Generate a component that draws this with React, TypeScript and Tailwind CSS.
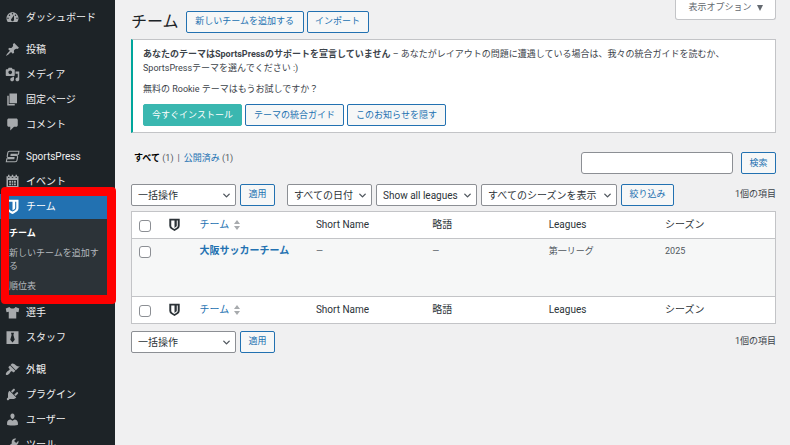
import { ReactNode } from "react";
import { ChevronDown } from "lucide-react";
import clsx from "clsx";

type MenuItem = { label: string; icon: ReactNode };

const icons = {
  dashboard: (
    <path d="M3.76 16h12.48c1.1-1.37 1.76-3.11 1.76-5 0-4.42-3.58-8-8-8s-8 3.58-8 8c0 1.89.66 3.63 1.76 5zM10 4c.55 0 1 .45 1 1s-.45 1-1 1-1-.45-1-1 .45-1 1-1zM6 6c.55 0 1 .45 1 1s-.45 1-1 1-1-.45-1-1 .45-1 1-1zm8 0c.55 0 1 .45 1 1s-.45 1-1 1-1-.45-1-1 .45-1 1-1zm-5.37 5.55L12 7v6c0 1.1-.9 2-2 2s-2-.9-2-2c0-.57.24-1.08.63-1.45zM4 10c.55 0 1 .45 1 1s-.45 1-1 1-1-.45-1-1 .45-1 1-1zm12 0c.55 0 1 .45 1 1s-.45 1-1 1-1-.45-1-1 .45-1 1-1z" fillRule="evenodd" />
  ),
  post: (
    <path d="M10.44 3.02l1.82-1.82 6.36 6.35-1.83 1.82c-1.05-.68-2.48-.57-3.41.36l-.75.75c-.92.93-1.04 2.35-.35 3.41l-1.83 1.82-2.41-2.41-2.8 2.79c-.42.42-3.38 2.71-3.8 2.29s1.86-3.39 2.28-3.81l2.79-2.79L4.1 9.36l1.83-1.82c1.05.69 2.48.57 3.4-.36l.75-.75c.93-.92 1.05-2.35.36-3.41z" />
  ),
  media: (
    <path d="M13 11V4c0-.55-.45-1-1-1h-1.67L9 1H5L3.67 3H2c-.55 0-1 .45-1 1v7c0 .55.45 1 1 1h10c.55 0 1-.45 1-1zM7 4.5c1.38 0 2.5 1.12 2.5 2.5S8.38 9.5 7 9.5 4.5 8.38 4.5 7 5.62 4.5 7 4.5zM14 6h5v10.5c0 1.38-1.12 2.5-2.5 2.5S14 17.88 14 16.5s1.12-2.5 2.5-2.5c.17 0 .34.02.5.05V9h-3V6zm-4 8.05V13h2v3.5c0 1.38-1.12 2.5-2.5 2.5S7 17.88 7 16.5 8.12 14 9.5 14c.17 0 .34.02.5.05z" fillRule="evenodd" />
  ),
  page: <path d="M6 15V2h10v13H6zm-1 1h8v2H3V5h2v11z" />,
  comment: (
    <path d="M5 2h10c1.1 0 2 .9 2 2v7c0 1.1-.9 2-2 2h-3l-5 5v-5H5c-1.1 0-2-.9-2-2V4c0-1.1.9-2 2-2z" />
  ),
  sportspress: (
    <path
      d="M18.500 3H6Q4 3 3.700 5L3 9.500Q2.800 11.500 4.500 11.500H12L11.800 13H2.500L1.800 17H13.500Q15.800 17 16 15L16.800 10.500Q17 8.500 15 8.500H8L8.200 7H18z"
      fill="none"
      stroke="currentColor"
      strokeWidth="1.5"
    />
  ),
  calendar: (
    <path
      d="M2 3h2v2h2V3h3v2h2V3h3v2h2V3h2v15H2V3zm2 5v8h12V8H4zm1.500 1H8v2.500H5.500V9zm3.500 0h2v2.500H9V9zm3 0h2.500v2.500H12V9zm-6.500 3.500H8V15H5.500v-2.500zm3.500 0h2V15H9v-2.500zm3 0h2.500V15H12v-2.500zM4 1h2v3H4V1zm5 0h2v3H9V1zm5 0h2v3h-2V1z"
      fillRule="evenodd"
    />
  ),
  shield: (
    <path
      d="M2 1h16v11c0 3.700-3.500 5.800-8 8-4.500-2.200-8-4.300-8-8V1zm3 2.800V12c0 2 2 3.300 5 4.800 3-1.500 5-2.800 5-4.800V3.800h-1.500V12c0 1.200-1.500 2.200-3.500 3.200V3.800H5z"
      fillRule="evenodd"
    />
  ),
  shirt: (
    <path d="M1 4.500L6 2.500c1 1.500 2.300 2 4 2s3-.5 4-2l5 2-1 5-3-.5v9H5V9l-3 .5-1-5z" />
  ),
  tie: (
    <path
      d="M2 1.500h16v17H2v-17zM8 3.500l.8 3L7 13l3 3.500 3-3.500-1.800-6.500.8-3H8z"
      fillRule="evenodd"
    />
  ),
  appearance: (
    <path d="M14.48 11.06L7.41 3.99l1.5-1.5c.5-.56 2.3-.47 3.51.32 1.21.8 1.43 1.28 2.91 2.1 1.18.64 2.45 1.26 4.45.85zm-.71.71L6.7 4.7 4.93 6.47c-.39.39-.39 1.02 0 1.41l1.06 1.06c.39.39.39 1.03 0 1.42-.6.6-1.43 1.11-2.21 1.69-.35.26-.7.53-1.01.84C1.43 14.23.4 16.08 1.4 17.07c.99 1 2.84-.03 4.18-1.36.31-.31.58-.66.85-1.02.57-.78 1.08-1.61 1.69-2.21.39-.39 1.02-.39 1.41 0l1.06 1.06c.39.39 1.02.39 1.41 0z" />
  ),
  plugin: (
    <path d="M13.11 4.36L9.87 7.6 8 5.73l3.24-3.24c.35-.34 1.05-.2 1.56.32.52.51.66 1.21.31 1.55zm-8 1.77l.91-1.12 9.01 9.01-1.19.84c-.71.71-2.63 1.16-3.82 1.16H6.14L4.9 17.26c-.59.59-1.54.59-2.12 0-.59-.58-.59-1.53 0-2.12l1.24-1.24v-3.88c0-1.13.4-3.19 1.09-3.89zm7.26 3.97l3.24-3.24c.34-.35 1.04-.21 1.55.31.52.51.66 1.21.31 1.55l-3.24 3.25z" />
  ),
  user: (
    <path d="M10 9.25c-2.27 0-2.73-3.44-2.73-3.44C7 4.02 7.82 2 9.97 2c2.16 0 2.98 2.02 2.71 3.81 0 0-.41 3.44-2.68 3.44zm0 2.57L12.72 10c2.39 0 4.52 2.33 4.52 4.53v2.49s-3.65 1.13-7.24 1.13c-3.65 0-7.24-1.13-7.24-1.13v-2.49c0-2.25 1.94-4.48 4.47-4.48z" />
  ),
  tools: (
    <path d="M16.68 9.77c-1.34 1.34-3.3 1.67-4.95.99l-5.41 6.52c-.99.99-2.59.99-3.58 0s-.99-2.59 0-3.57l6.52-5.42c-.68-1.65-.35-3.61.99-4.95 1.28-1.28 3.12-1.62 4.72-1.06l-2.89 2.89 2.82 2.82 2.86-2.87c.53 1.58.18 3.39-1.08 4.65zM3.81 16.21c.4.39 1.04.39 1.43 0 .4-.4.4-1.04 0-1.43-.39-.4-1.03-.4-1.43 0-.39.39-.39 1.03 0 1.43z" fillRule="evenodd" />
  ),
};

const contentMenu: MenuItem[] = [
  { label: "投稿", icon: icons.post },
  { label: "メディア", icon: icons.media },
  { label: "固定ページ", icon: icons.page },
  { label: "コメント", icon: icons.comment },
];

const sportsMenu: MenuItem[] = [
  { label: "SportsPress", icon: icons.sportspress },
  { label: "イベント", icon: icons.calendar },
];

const peopleMenu: MenuItem[] = [
  { label: "選手", icon: icons.shirt },
  { label: "スタッフ", icon: icons.tie },
];

const settingsMenu: MenuItem[] = [
  { label: "外観", icon: icons.appearance },
  { label: "プラグイン", icon: icons.plugin },
  { label: "ユーザー", icon: icons.user },
  { label: "ツール", icon: icons.tools },
];

function Icon({ children, className }: { children: ReactNode; className?: string }) {
  return (
    <svg viewBox="0 0 20 20" fill="currentColor" aria-hidden="true" className={clsx("shrink-0", className)}>
      {children}
    </svg>
  );
}

function MenuLink({ item, active }: { item: MenuItem; active?: boolean }) {
  return (
    <a
      href="#"
      className={clsx(
        "flex items-center gap-[6px] py-[5px] pl-[5px] text-[10px] leading-[15px] whitespace-nowrap",
        active ? "bg-[#2271b1] text-white" : "text-[#f0f0f1]",
      )}
    >
      <Icon className={clsx("size-[15px]", active ? "text-white" : "text-[#a7aaad]")}>{item.icon}</Icon>
      {item.label}
    </a>
  );
}

function MenuGroup({ items }: { items: MenuItem[] }) {
  return (
    <>
      {items.map((item) => (
        <MenuLink key={item.label} item={item} />
      ))}
    </>
  );
}

function Sidebar() {
  return (
    <nav className="flex h-screen w-[115px] shrink-0 flex-col gap-[7px] bg-[#1d2327] pt-[5px]">
      <div>
        <MenuLink item={{ label: "ダッシュボード", icon: icons.dashboard }} />
      </div>
      <div>
        <MenuGroup items={contentMenu} />
      </div>
      <div>
        <MenuGroup items={sportsMenu} />
        <div className="relative">
          <MenuLink item={{ label: "チーム", icon: icons.shield }} active />
          <div className="flex flex-col gap-[7px] bg-[#2c3338] pt-2 pr-3 pb-[7px] pl-[9px] text-[9px] leading-[13px] text-[#b4b9be]">
            <a href="#" className="font-bold text-white">チーム</a>
            <a href="#">新しいチームを追加する</a>
            <a href="#">順位表</a>
          </div>
          <div className="pointer-events-none absolute -top-[7px] -right-px -bottom-1 left-px rounded-[4px] border-[9px] border-l-8 border-[#ff0000]" />
        </div>
        <MenuGroup items={peopleMenu} />
      </div>
      <div>
        <MenuGroup items={settingsMenu} />
      </div>
    </nav>
  );
}

function Button({ children, primary, className }: { children: ReactNode; primary?: boolean; className?: string }) {
  return (
    <button
      type="button"
      className={clsx(
        "h-[22px] shrink-0 rounded-[2px] border text-[9px] whitespace-nowrap",
        primary ? "border-[#3ab7b0] bg-[#3ab7b0] text-white" : "border-[#2271b1] bg-[#f6f7f7] text-[#2271b1]",
        className,
      )}
    >
      {children}
    </button>
  );
}

function Select({ label, option, className }: { label: string; option: string; className: string }) {
  return (
    <div className={clsx("relative shrink-0", className)}>
      <select
        aria-label={label}
        className="block h-[22px] w-full appearance-none rounded-[2px] border border-[#8c8f94] bg-white pl-[6px] text-[10px] text-[#2c3338]"
      >
        <option>{option}</option>
      </select>
      <ChevronDown className="pointer-events-none absolute top-[6px] right-1 size-[11px] text-[#50575e]" strokeWidth={3} />
    </div>
  );
}

function BulkActions() {
  return (
    <div className="flex gap-1">
      <Select label="一括操作を選択" option="一括操作" className="w-[105px]" />
      <Button className="w-[35px]">適用</Button>
    </div>
  );
}

function Checkbox({ label }: { label: string }) {
  return (
    <input
      type="checkbox"
      aria-label={label}
      className="block size-3 appearance-none rounded-[3px] border border-[#8c8f94] bg-white"
    />
  );
}

function ColumnTitles() {
  return (
    <tr className="h-[27px] text-left align-top text-[10px] leading-[14px] text-[#2c3338]">
      <td className="pt-2 pl-[7px]">
        <Checkbox label="すべて選択" />
      </td>
      <th className="pt-[6px] pl-[5px]">
        <Icon className="size-[13px]">{icons.shield}</Icon>
      </th>
      <th className="px-[6px] pt-[6px] font-normal">
        <a href="#" className="flex items-center gap-[5px] text-[#2271b1]">
          チーム
          <svg viewBox="0 0 6 10" fill="#a7aaad" aria-hidden="true" className="h-[10px] w-[6px]">
            <path d="M3 0l3 4H0zM3 10l3-4H0z" />
          </svg>
        </a>
      </th>
      <th className="px-[6px] pt-[6px] font-normal">Short Name</th>
      <th className="px-[6px] pt-[6px] font-normal">略語</th>
      <th className="px-[6px] pt-[6px] font-normal">Leagues</th>
      <th className="px-[6px] pt-[6px] font-normal">シーズン</th>
    </tr>
  );
}

function TeamsTable() {
  return (
    <table className="w-full table-fixed border border-[#c3c4c7] bg-white">
      <colgroup>
        <col className="w-[31px]" />
        <col className="w-[31px]" />
        <col span={5} />
      </colgroup>
      <thead className="border-b border-[#c3c4c7]">
        <ColumnTitles />
      </thead>
      <tbody>
        <tr className="h-[58px] bg-[#f6f7f7] align-top text-[9px] leading-[14px] text-[#50575e]">
          <td className="pt-[7px] pl-[7px]">
            <Checkbox label="大阪サッカーチームを選択" />
          </td>
          <td />
          <td className="px-[6px] pt-[5px]">
            <a href="#" className="text-[10px] font-bold whitespace-nowrap text-[#2271b1]">大阪サッカーチーム</a>
          </td>
          <td className="px-[6px] pt-[5px]">—</td>
          <td className="px-[6px] pt-[5px]">—</td>
          <td className="px-[6px] pt-[5px]">第一リーグ</td>
          <td className="px-[6px] pt-[5px]">2025</td>
        </tr>
      </tbody>
      <tfoot className="border-t border-[#c3c4c7]">
        <ColumnTitles />
      </tfoot>
    </table>
  );
}

function Notice() {
  return (
    <section className="border border-l-2 border-[#c3c4c7] border-l-[#00a69c] bg-white px-[10px] pt-[7px] pb-[6px] text-[9px] leading-[14px] text-[#3c434a]">
      <p>
        <strong>あなたのテーマはSportsPressのサポートを宣言していません</strong>{" "}
        – あなたがレイアウトの問題に遭遇している場合は、我々の統合ガイドを読むか、
        <br />
        SportsPressテーマを選んでください :)
      </p>
      <p className="mt-[7px]">無料の Rookie テーマはもうお試しですか？</p>
      <div className="mt-2 flex gap-[3px]">
        <Button primary className="w-[99px]">今すぐインストール</Button>
        <Button className="w-[99px]">テーマの統合ガイド</Button>
        <Button className="w-[99px]">このお知らせを隠す</Button>
      </div>
    </section>
  );
}

export default function App() {
  return (
    <div className="flex h-screen overflow-hidden bg-[#f0f0f1] font-['Roboto','Noto_Sans_CJK_JP',sans-serif] text-[#3c434a]">
      <Sidebar />
      <main className="min-w-0 flex-1 pr-[14px] pl-4">
        <header className="flex h-[39px] items-start justify-between">
          <div className="flex items-center gap-[3px] pt-[11px]">
            <h1 className="mr-1 text-[16px] leading-[20px] text-[#1d2327]">チーム</h1>
            <Button className="w-[118px]">新しいチームを追加する</Button>
            <Button className="w-[62px]">インポート</Button>
          </div>
          <button
            type="button"
            className="flex h-5 w-[101px] items-center justify-center gap-[5px] rounded-b-[3px] border border-t-0 border-[#c3c4c7] bg-white pb-[3px] text-[9px] text-[#646970]"
          >
            表示オプション
            <svg viewBox="0 0 6 6" fill="currentColor" aria-hidden="true" className="size-[6px]">
              <path d="M0 0h6L3 6z" />
            </svg>
          </button>
        </header>

        <Notice />

        <div className="mt-[19px] flex items-start justify-between text-[9px] leading-[12px]">
          <div className="flex gap-1 pl-[3px] text-[#50575e]">
            <span>
              <a href="#" className="font-bold text-black">すべて</a> (1)
            </span>
            <span>|</span>
            <span>
              <a href="#" className="text-[#2271b1]">公開済み</a> (1)
            </span>
          </div>
          <form className="flex gap-2">
            <input
              type="search"
              aria-label="チームを検索"
              className="h-[22px] w-[152px] rounded-[3px] border border-[#8c8f94] bg-white px-[6px] text-[10px]"
            />
            <Button className="w-[35px]">検索</Button>
          </form>
        </div>

        <div className="mt-[10px] mb-[5px] flex items-center justify-between">
          <div className="flex gap-3">
            <BulkActions />
            <div className="flex gap-1">
              <Select label="日付で絞り込む" option="すべての日付" className="w-[85px]" />
              <Select label="リーグで絞り込む" option="Show all leagues" className="w-[101px]" />
              <Select label="シーズンで絞り込む" option="すべてのシーズンを表示" className="w-[136px]" />
              <Button className="w-[53px]">絞り込み</Button>
            </div>
          </div>
          <span className="text-[9px]">1個の項目</span>
        </div>

        <TeamsTable />

        <div className="mt-[7px] flex items-center justify-between">
          <BulkActions />
          <span className="text-[9px]">1個の項目</span>
        </div>
      </main>
    </div>
  );
}
